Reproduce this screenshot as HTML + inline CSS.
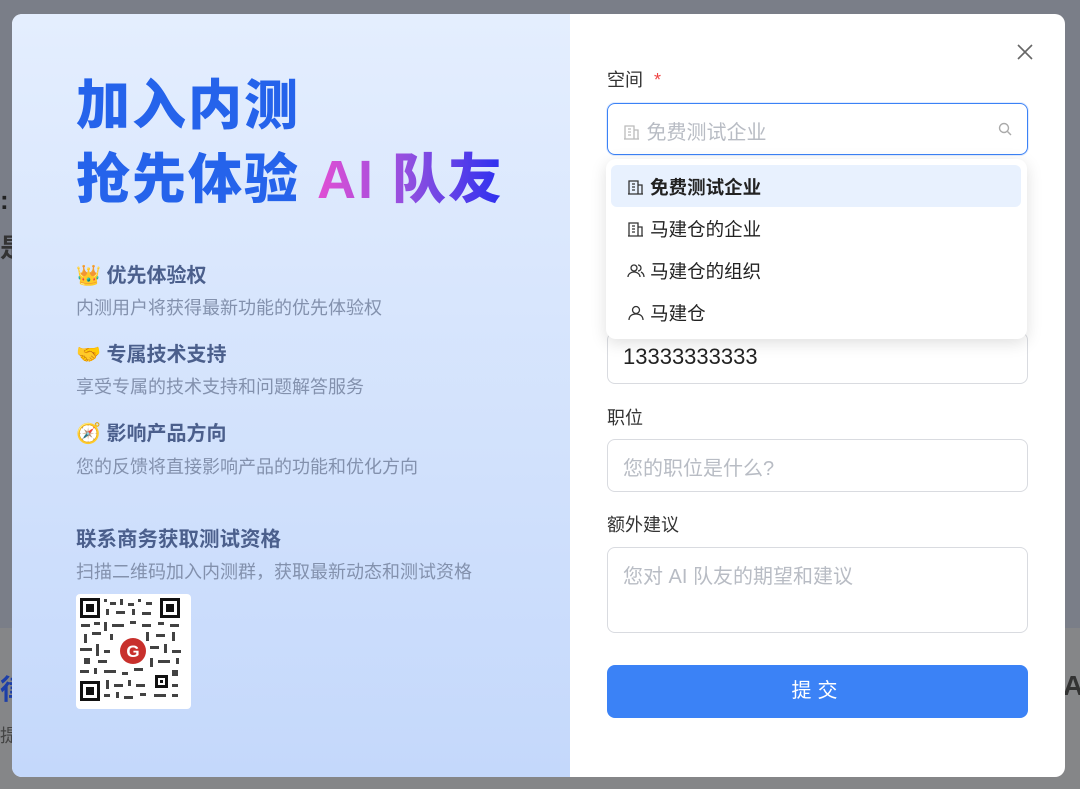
<!DOCTYPE html>
<html><head><meta charset="utf-8"><style>
*{box-sizing:border-box;margin:0;padding:0}
body{width:1080px;height:789px;overflow:hidden;background:#7a7e88;font-family:"Liberation Sans","Noto Sans CJK SC",sans-serif;position:relative}
.bgl{position:absolute;left:0;top:628px;width:1080px;height:161px;background:#858688}
.bgt{position:absolute;color:#222;font-weight:700}
.modal{position:absolute;left:12px;top:14px;width:1053px;height:763px;border-radius:10px;overflow:hidden;background:#fff;display:flex}
.left{width:558px;height:100%;background:linear-gradient(180deg,#e4eefe 0%,#c4d8fb 100%);position:relative}
.h1{position:absolute;left:64px;font-size:54px;font-weight:900;color:#2563eb;letter-spacing:2px;line-height:64px;white-space:nowrap}
.grad{background:linear-gradient(90deg,#e14fd4,#8f4fe0 50%,#2a2ff0);-webkit-background-clip:text;color:transparent}
.ft{position:absolute;left:64px;font-size:20px;font-weight:700;color:#4b5f8c;white-space:nowrap}
.fd{position:absolute;left:64px;font-size:18px;color:#8391ad;white-space:nowrap}
.right{flex:1;position:relative}
.lbl{position:absolute;left:37px;font-size:18px;color:#333}
.inp{position:absolute;left:37px;width:421px;border:1px solid #d9dbe0;border-radius:8px;font-size:20px}
.ph{color:#b8bcc4}
</style></head><body>
<div class="bgl"></div>
<div class="bgt" style="left:0;top:185px;font-size:26px">:</div>
<div class="bgt" style="left:0;top:228px;font-size:26px;color:#333">是</div>
<div class="bgt" style="left:0;top:668px;font-size:28px;color:#1d3fa8">律</div>
<div class="bgt" style="left:0;top:722px;font-size:18px;color:#444;font-weight:400">提</div>
<div class="bgt" style="left:1063px;top:670px;font-size:28px;color:#333">A</div>
<div class="modal">
 <div class="left">
  <div class="h1" style="top:60px">加入内测</div>
  <div class="h1" style="top:134px">抢先体验 <span class="grad">AI 队友</span></div>
  <div class="ft" style="top:245px">👑 优先体验权</div>
  <div class="fd" style="top:280px">内测用户将获得最新功能的优先体验权</div>
  <div class="ft" style="top:324px">🤝 专属技术支持</div>
  <div class="fd" style="top:359px">享受专属的技术支持和问题解答服务</div>
  <div class="ft" style="top:403px">🧭 影响产品方向</div>
  <div class="fd" style="top:439px">您的反馈将直接影响产品的功能和优化方向</div>
  <div class="ft" style="top:508px;font-size:20.5px">联系商务获取测试资格</div>
  <div class="fd" style="top:544px">扫描二维码加入内测群，获取最新动态和测试资格</div>
  <div style="position:absolute;left:64px;top:580px;width:115px;height:115px;background:#fff;border-radius:4px">
   <svg width="115" height="115" viewBox="0 0 115 115">
    <g fill="#111">
     <rect x="4" y="4" width="20" height="20"/><rect x="84" y="4" width="20" height="20"/><rect x="4" y="87" width="20" height="20"/>
    </g>
    <g fill="#fff"><rect x="7" y="7" width="14" height="14"/><rect x="87" y="7" width="14" height="14"/><rect x="7" y="90" width="14" height="14"/></g>
    <g fill="#111"><rect x="10" y="10" width="8" height="8"/><rect x="90" y="10" width="8" height="8"/><rect x="10" y="93" width="8" height="8"/>
     <rect x="79" y="81" width="13" height="13"/></g>
    <rect x="82" y="84" width="7" height="7" fill="#fff"/><rect x="84" y="86" width="3" height="3" fill="#111"/>
    <g fill="#222" opacity=".85">
     <rect x="28" y="5" width="3" height="3"/><rect x="34" y="8" width="6" height="3"/><rect x="44" y="5" width="3" height="6"/><rect x="52" y="9" width="6" height="3"/><rect x="62" y="5" width="3" height="3"/><rect x="70" y="8" width="6" height="3"/><rect x="30" y="15" width="3" height="6"/><rect x="40" y="17" width="9" height="3"/><rect x="56" y="15" width="3" height="6"/><rect x="66" y="18" width="9" height="3"/>
     <rect x="5" y="30" width="9" height="3"/><rect x="18" y="28" width="6" height="3"/><rect x="28" y="28" width="3" height="9"/><rect x="36" y="30" width="12" height="3"/><rect x="54" y="27" width="6" height="3"/><rect x="66" y="30" width="9" height="3"/><rect x="82" y="28" width="6" height="3"/><rect x="94" y="30" width="9" height="3"/>
     <rect x="8" y="40" width="3" height="9"/><rect x="16" y="38" width="9" height="3"/><rect x="34" y="40" width="3" height="6"/><rect x="70" y="38" width="3" height="9"/><rect x="80" y="40" width="9" height="3"/><rect x="96" y="38" width="3" height="9"/>
     <rect x="4" y="54" width="12" height="3"/><rect x="20" y="50" width="3" height="12"/><rect x="28" y="56" width="6" height="3"/><rect x="74" y="52" width="9" height="3"/><rect x="88" y="50" width="3" height="9"/><rect x="96" y="56" width="9" height="3"/>
     <rect x="8" y="64" width="6" height="6"/><rect x="22" y="66" width="9" height="3"/><rect x="74" y="64" width="3" height="9"/><rect x="82" y="66" width="12" height="3"/><rect x="100" y="64" width="3" height="6"/>
     <rect x="4" y="76" width="9" height="3"/><rect x="18" y="74" width="3" height="6"/><rect x="28" y="76" width="12" height="3"/><rect x="46" y="78" width="6" height="3"/><rect x="58" y="74" width="9" height="3"/><rect x="96" y="76" width="6" height="6"/>
     <rect x="30" y="86" width="3" height="9"/><rect x="38" y="90" width="9" height="3"/><rect x="52" y="86" width="3" height="6"/><rect x="60" y="90" width="9" height="3"/><rect x="96" y="90" width="6" height="3"/>
     <rect x="28" y="100" width="6" height="3"/><rect x="40" y="98" width="3" height="6"/><rect x="48" y="102" width="9" height="3"/><rect x="64" y="99" width="6" height="3"/><rect x="78" y="100" width="12" height="3"/><rect x="96" y="100" width="6" height="3"/>
    </g>
    <circle cx="57" cy="57" r="13" fill="#c8302c"/>
    <text x="57" y="63" text-anchor="middle" font-size="17" font-weight="700" fill="#fff" font-family="Liberation Sans">G</text>
   </svg>
  </div>
 </div>
 <div class="right">
  <svg style="position:absolute;left:446px;top:29px" width="18" height="18" viewBox="0 0 18 18"><path d="M2 2L16 16M16 2L2 16" stroke="#666" stroke-width="1.6"/></svg>
  <div class="lbl" style="top:52px">空间 <span style="color:#ef4444;margin-left:6px">*</span></div>
  <div class="inp" style="top:89px;height:52px;border:1.5px solid #3b82f6;box-shadow:0 0 0 1px rgba(59,130,246,.15)">
   <div style="position:absolute;left:15px;top:12px" class="ph">
    <svg width="18" height="18" viewBox="0 0 18 18" style="vertical-align:-2px"><path d="M2 16V3h9v13M11 7h4v9M1 16h15M5 6h3M5 9h3M5 12h3" stroke="#bbb" fill="none" stroke-width="1.3"/></svg> 免费测试企业</div>
   <svg style="position:absolute;right:14px;top:17px" width="16" height="16" viewBox="0 0 16 16"><circle cx="7" cy="7" r="4.5" stroke="#aaa" fill="none" stroke-width="1.4"/><path d="M10.5 10.5L14 14" stroke="#aaa" stroke-width="1.4"/></svg>
  </div>
  <div class="inp" style="top:318px;height:52px;padding:11px 15px;color:#222;font-size:22px">13333333333</div>
  <div class="lbl" style="top:390px">职位</div>
  <div class="inp" style="top:425px;height:53px;padding:12px 15px"><span class="ph">您的职位是什么?</span></div>
  <div class="lbl" style="top:497px">额外建议</div>
  <div class="inp" style="top:533px;height:86px;padding:12px 15px"><span class="ph">您对 AI 队友的期望和建议</span></div>
  <div style="position:absolute;left:37px;top:651px;width:421px;height:53px;background:#3b82f6;border-radius:8px;color:#fff;font-size:20px;text-align:center;line-height:53px;letter-spacing:6px">提交</div>
  <div style="position:absolute;left:36px;top:145px;width:421px;height:180px;background:#fff;border-radius:10px;box-shadow:0 4px 16px rgba(0,0,0,.13);font-size:18.5px;color:#222">
   <div style="position:absolute;left:5px;top:6px;width:410px;height:42px;background:#e8f1fe;border-radius:6px"></div>
   <div style="position:absolute;left:21px;top:15px;font-weight:700"><svg width="18" height="18" viewBox="0 0 18 18" style="vertical-align:-2px"><path d="M2 16V3h9v13M11 7h4v9M1 16h15M5 6h3M5 9h3M5 12h3" stroke="#333" fill="none" stroke-width="1.3"/></svg> 免费测试企业</div>
   <div style="position:absolute;left:21px;top:57px"><svg width="18" height="18" viewBox="0 0 18 18" style="vertical-align:-2px"><path d="M2 16V3h9v13M11 7h4v9M1 16h15M5 6h3M5 9h3M5 12h3" stroke="#333" fill="none" stroke-width="1.3"/></svg> 马建仓的企业</div>
   <div style="position:absolute;left:21px;top:99px"><svg width="18" height="18" viewBox="0 0 18 18" style="vertical-align:-2px"><circle cx="7" cy="6" r="3" stroke="#333" fill="none" stroke-width="1.3"/><path d="M1 15c0-3 3-5 6-5s6 2 6 5M11 3a3 3 0 010 6M14 10c2 1 3 3 3 5" stroke="#333" fill="none" stroke-width="1.3"/></svg> 马建仓的组织</div>
   <div style="position:absolute;left:21px;top:141px"><svg width="18" height="18" viewBox="0 0 18 18" style="vertical-align:-2px"><circle cx="9" cy="6" r="3.5" stroke="#333" fill="none" stroke-width="1.3"/><path d="M2 16c0-4 3-6 7-6s7 2 7 6" stroke="#333" fill="none" stroke-width="1.3"/></svg> 马建仓</div>
  </div>
 </div>
</div>
</body></html>
